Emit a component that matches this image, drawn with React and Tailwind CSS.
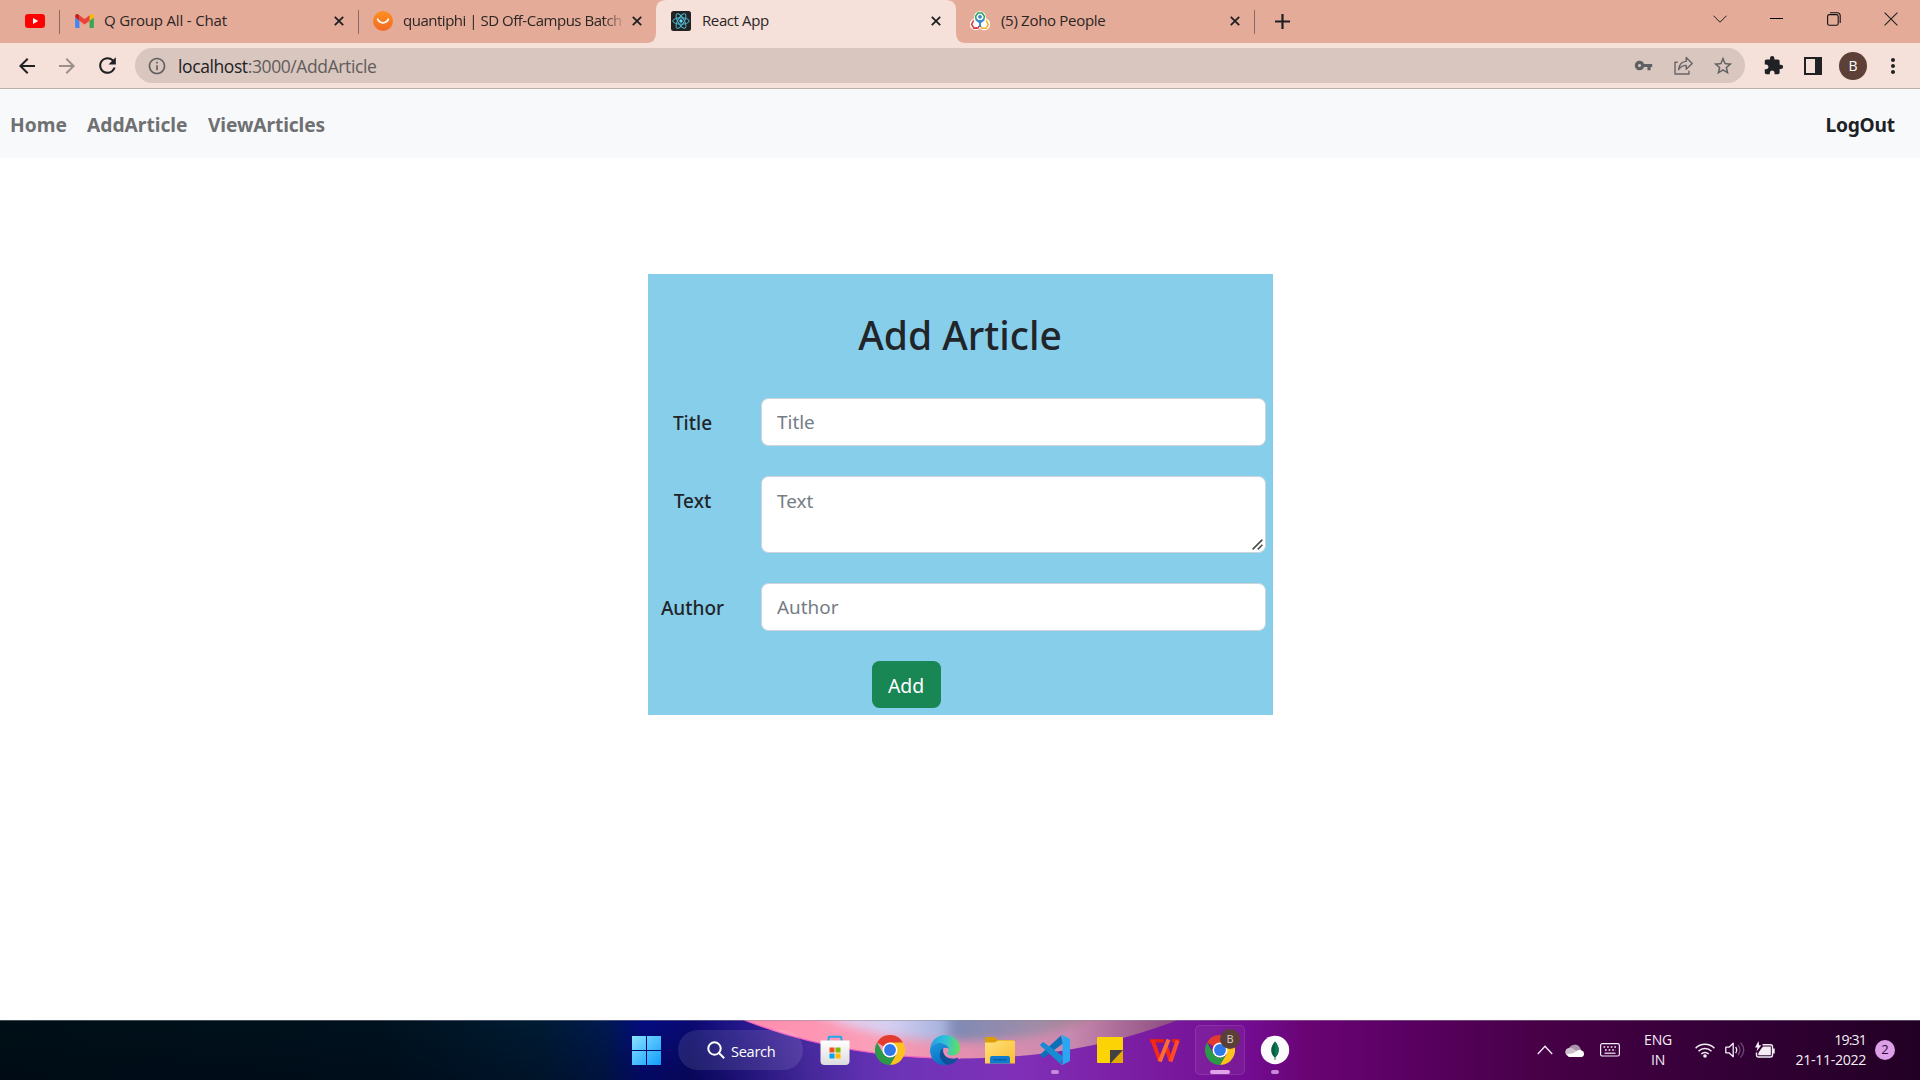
import React from "react";
import {
  MdArrowBack,
  MdArrowForward,
  MdRefresh,
  MdInfoOutline,
  MdVpnKey,
  MdStarBorder,
  MdExtension,
  MdMoreVert,
} from "react-icons/md";

/* ---------- Browser chrome ---------- */

function CloseMark() {
  return (
    <svg className="size-[10px] shrink-0" viewBox="0 0 10 10" stroke="#1f1f22" strokeWidth="1.8" fill="none">
      <path d="M.8 .8 9.2 9.2M9.2 .8.8 9.2" />
    </svg>
  );
}

function YouTubeIcon() {
  return (
    <svg className="h-[14px] w-5" viewBox="0 0 20 14">
      <rect width="20" height="14" rx="3.2" fill="#f00" />
      <path d="M8 4v6l5.2-3z" fill="#fff" />
    </svg>
  );
}

function GmailIcon() {
  return (
    <svg className="h-[14px] w-[19px]" viewBox="52 42 88 66">
      <path fill="#4285f4" d="M58 108h14V74L52 59v43c0 3.32 2.69 6 6 6" />
      <path fill="#34a853" d="M120 108h14c3.32 0 6-2.69 6-6V59l-20 15" />
      <path fill="#fbbc04" d="M120 48v26l20-15v-8c0-7.42-8.47-11.65-14.4-7.2" />
      <path fill="#ea4335" d="M72 74V48l24 18 24-18v26L96 92" />
      <path fill="#c5221f" d="M52 51v8l20 15V48l-5.6-4.2c-5.94-4.45-14.4-.22-14.4 7.2" />
    </svg>
  );
}

function SmileIcon() {
  return (
    <svg className="size-5" viewBox="0 0 20 20">
      <defs>
        <linearGradient id="smile" x1="0" y1="0" x2="0" y2="1">
          <stop offset="0" stopColor="#fd8f22" />
          <stop offset="1" stopColor="#f36a24" />
        </linearGradient>
      </defs>
      <circle cx="10" cy="10" r="10" fill="url(#smile)" />
      <path d="M4.6 8.2C6.6 13 13.4 13 15.4 8.2" stroke="#fff" strokeWidth="1.7" fill="none" strokeLinecap="round" />
    </svg>
  );
}

function ReactIcon() {
  return (
    <svg className="size-5" viewBox="0 0 20 20">
      <rect width="20" height="20" rx="2.5" fill="#222" />
      <g fill="none" stroke="#4fb8d3" strokeWidth="1">
        <ellipse cx="10" cy="10" rx="8.2" ry="3.2" />
        <ellipse cx="10" cy="10" rx="8.2" ry="3.2" transform="rotate(60 10 10)" />
        <ellipse cx="10" cy="10" rx="8.2" ry="3.2" transform="rotate(120 10 10)" />
      </g>
      <circle cx="10" cy="10" r="1.7" fill="#61dafb" />
    </svg>
  );
}

function ZohoIcon() {
  return (
    <svg className="size-5" viewBox="0 0 20 20">
      <g fill="#fff" stroke="#fff" strokeWidth="2">
        <circle cx="10" cy="6.2" r="5" />
        <circle cx="5.8" cy="13.2" r="5" />
        <circle cx="14.2" cy="13.2" r="5" />
      </g>
      <g fill="none" strokeWidth="1.5">
        <path d="M7.5 17 4 17.2 1.6 13.4 3.6 9.4" stroke="#e4333c" />
        <path d="M3.6 17.3h4.2l1.2-2.2" stroke="#e4333c" />
        <path d="M16 9.4l2.4 4-2.4 3.9h-4l-1.200-2" stroke="#f4b223" />
        <path d="M6.3 9 5.6 5.2 8 2h4l2.4 3.2L13.7 9" stroke="#23a55b" />
      </g>
      <circle cx="10" cy="5.8" r="1.9" fill="#3f84d0" />
      <path d="M6.2 8.6 10 11.6l3.8-3M10 9v7" stroke="#3f84d0" strokeWidth="2" fill="none" />
    </svg>
  );
}

function TabBar() {
  return (
    <div className="flex h-[43px] bg-[#e4ab99] text-[15px] text-[#2b2523]">
      <div className="flex w-[59px] items-center pb-px pl-[25px]">
        <YouTubeIcon />
      </div>
      <div className="mt-[10px] h-6 w-px bg-[#8b6a61]" />

      <div className="flex w-[298px] items-center pb-px pl-[15px] pr-[14px]">
        <GmailIcon />
        <span className="ml-[10px] flex-1 whitespace-nowrap pb-[2px] leading-5 tracking-[-0.17px]">Q Group All - Chat</span>
        <CloseMark />
      </div>
      <div className="mt-[10px] h-6 w-px bg-[#8b6a61]" />

      <div className="relative z-10 flex w-[297px] items-center pb-px pl-[14px] pr-[14px]">
        <SmileIcon />
        <span className="ml-[10px] w-[218px] overflow-hidden whitespace-nowrap pb-[2px] leading-5 tracking-[-0.48px] [mask-image:linear-gradient(to_right,black_92%,transparent_102%)]">
          quantiphi | SD Off-Campus Batch
        </span>
        <span className="ml-auto">
          <CloseMark />
        </span>
      </div>

      <div className="relative w-[300px]">
        <svg className="absolute -left-[10px] top-0 h-[43px] w-[320px]" viewBox="0 0 320 43" fill="#f6e1da">
          <path d="M0 43q10 0 10-10V10Q10 0 20 0H300q10 0 10 10V33q0 10 10 10z" />
        </svg>
        <div className="relative flex h-full items-center pb-px pl-[15px] pr-[15px]">
          <ReactIcon />
          <span className="ml-[11px] flex-1 whitespace-nowrap pb-[2px] leading-5 tracking-[-0.4px]">React App</span>
          <CloseMark />
        </div>
      </div>

      <div className="flex w-[298px] items-center pb-px pl-[14px] pr-[14px]">
        <ZohoIcon />
        <span className="ml-[11px] flex-1 whitespace-nowrap pb-[2px] leading-5 tracking-[-0.3px]">(5) Zoho People</span>
        <CloseMark />
      </div>
      <div className="mt-[10px] h-6 w-px bg-[#8b6a61]" />

      <div className="flex items-center pl-[20px]">
        <svg className="size-[15px]" viewBox="0 0 15 15" stroke="#1f1f22" strokeWidth="2.2">
          <path d="M7.5 0v15M0 7.5h15" />
        </svg>
      </div>

      <div className="ml-auto flex h-[37px] items-center">
        <div className="flex w-[57px] justify-center">
          <svg className="h-[8px] w-[14px]" viewBox="0 0 14 8" stroke="#222" fill="none">
            <path d="M.5 .7 7 7.2 13.5 .7" />
          </svg>
        </div>
        <div className="flex w-[57px] justify-center">
          <div className="h-px w-[13px] bg-black" />
        </div>
        <div className="flex w-[57px] justify-center">
          <svg className="size-[14px]" viewBox="0 0 14 14" stroke="#111" strokeWidth="1.1" fill="none">
            <rect x=".6" y="2.6" width="10.6" height="10.6" rx="1.8" />
            <path d="M3 .8h7.4a2.8 2.8 0 0 1 2.8 2.8V11" />
          </svg>
        </div>
        <div className="flex w-[58px] justify-center">
          <svg className="size-[14px]" viewBox="0 0 14 14" stroke="#222" strokeWidth="1.1" fill="none">
            <path d="M.6 .6 13.4 13.4M13.4 .6.6 13.4" />
          </svg>
        </div>
      </div>
    </div>
  );
}

function Cell({ children }) {
  return <div className="flex w-10 shrink-0 items-center justify-center">{children}</div>;
}

function Toolbar() {
  return (
    <div className="flex h-[46px] items-center border-b border-[#bcaeaa] bg-[#f6e1da] pl-[7px] pr-[7px] text-[#202124]">
      <Cell>
        <MdArrowBack className="size-6" />
      </Cell>
      <Cell>
        <MdArrowForward className="size-6 text-[#9b8f8c]" />
      </Cell>
      <Cell>
        <MdRefresh className="size-[25px]" />
      </Cell>
      <div className="ml-[8px] flex h-[35px] flex-1 items-center rounded-full bg-[#d8c6bf] pl-[12px] pr-[2px] text-[#5f6062]">
        <MdInfoOutline className="size-5" />
        <span className="ml-[11px] flex-1 pt-px text-[17.5px] leading-6 tracking-[-0.4px] text-[#625c5b]">
          <span className="text-[#202124]">localhost</span>:3000/AddArticle
        </span>
        <Cell>
          <MdVpnKey className="size-[19px]" />
        </Cell>
        <Cell>
          <svg className="size-[19px]" viewBox="0 0 19 19" fill="none" stroke="#6a6466" strokeWidth="1.4" strokeLinejoin="round">
            <path d="M3.6 6.2H1V18h14v-3.2" />
            <path d="M4.6 13.6C5.2 9 7.6 5.6 12.2 5.4V1.4l6 6-6 5.800V9.400c-3.400 0-5.800 1.400-7.600 4.200z" />
          </svg>
        </Cell>
        <Cell>
          <MdStarBorder className="size-[22px]" />
        </Cell>
      </div>
      <div className="ml-[8px] flex">
        <Cell>
          <MdExtension className="size-[21px]" />
        </Cell>
        <Cell>
          <svg className="size-[18px]" viewBox="0 0 18 18">
            <rect x="1" y="1" width="16" height="16" fill="none" stroke="#202124" strokeWidth="2" />
            <rect x="11" y="1" width="6" height="16" fill="#202124" />
          </svg>
        </Cell>
        <Cell>
          <div className="flex size-7 items-center justify-center rounded-full bg-[#5d4037] text-[14px] text-white">B</div>
        </Cell>
        <Cell>
          <MdMoreVert className="size-6" />
        </Cell>
      </div>
    </div>
  );
}

/* ---------- Page ---------- */

function NavBar() {
  return (
    <nav className="flex h-[69px] items-center bg-[#f8f9fb] pl-[10px] pr-[25px] pt-[2px] text-[19.2px] font-bold leading-8 text-[#6f7072]">
      <a className="w-[77px]">Home</a>
      <a className="w-[121px]">AddArticle</a>
      <a className="tracking-[-0.1px]">ViewArticles</a>
      <a className="ml-auto tracking-[-0.2px] text-[#1e2226]">LogOut</a>
    </nav>
  );
}

function Field({ label, children }) {
  return (
    <div className="flex">
      <label className="w-[90px] pt-[10px] text-center text-[19px] font-medium leading-[30px] text-[#212529]">{label}</label>
      <div className="relative ml-[23px] flex w-[505px]">{children}</div>
    </div>
  );
}

function ArticleForm() {
  const box =
    "w-full resize-none rounded-[7.5px] border border-[#ced4da] bg-white px-[15.5px] text-[18.9px] leading-[30px] text-[#212529] outline-none placeholder:text-[#757d85]";
  return (
    <form className="mx-auto h-[441px] w-[625px] bg-[#87ceeb]">
      <h1 className="pt-[37px] text-center text-[39px] font-medium leading-[48px] text-[#212529]">Add Article</h1>
      <div className="mt-[39px] flex flex-col gap-[30px]">
        <Field label="Title">
          <input className={`${box} h-12`} placeholder="Title" />
        </Field>
        <Field label="Text">
          <textarea className={`${box} block h-[77px] pt-[9px]`} placeholder="Text" />
          <svg className="absolute bottom-[3px] right-[3px] size-[11px]" viewBox="0 0 11 11" stroke="#4a4a4a" strokeWidth="1.5">
            <path d="M.6 10.400 10.400 .6M5.800 10.400 10.400 5.800" />
          </svg>
        </Field>
        <Field label="Author">
          <input className={`${box} h-12`} placeholder="Author" />
        </Field>
        <button
          type="button"
          className="ml-[224px] h-[47px] w-[69px] rounded-[7.5px] bg-[#198754] pt-[2px] text-[19.4px] leading-[30px] text-white"
        >
          Add
        </button>
      </div>
    </form>
  );
}

/* ---------- Taskbar ---------- */

function Wallpaper() {
  return (
    <svg className="absolute inset-0 h-full w-full" viewBox="0 0 1920 60" preserveAspectRatio="none">
      <defs>
        <linearGradient id="base" x1="0" x2="1" y1="0" y2="0">
          <stop offset="0" stopColor="#001017" />
          <stop offset=".2" stopColor="#00131f" />
          <stop offset=".28" stopColor="#001c33" />
          <stop offset=".315" stopColor="#001a50" />
          <stop offset=".335" stopColor="#050c80" />
          <stop offset=".36" stopColor="#0a0a72" />
          <stop offset=".385" stopColor="#25178c" />
          <stop offset=".42" stopColor="#4a2ba4" />
          <stop offset=".47" stopColor="#6d34b8" />
          <stop offset=".53" stopColor="#8030b8" />
          <stop offset=".6" stopColor="#7a1ba0" />
          <stop offset=".65" stopColor="#730c92" />
          <stop offset=".68" stopColor="#6a0474" />
          <stop offset=".73" stopColor="#5b0064" />
          <stop offset=".8" stopColor="#480047" />
          <stop offset=".9" stopColor="#330036" />
          <stop offset="1" stopColor="#220024" />
        </linearGradient>
        <linearGradient id="shade" x1="0" x2="0" y1="0" y2="1">
          <stop offset="0" stopColor="#001" stopOpacity="0" />
          <stop offset="1" stopColor="#001" stopOpacity=".28" />
        </linearGradient>
        <linearGradient id="shadeFade" x1="0" x2="1" y1="0" y2="0">
          <stop offset=".8" stopColor="#fff" />
          <stop offset="1" stopColor="#000" />
        </linearGradient>
        <mask id="shadeMask">
          <rect width="860" height="60" fill="url(#shadeFade)" />
        </mask>
        <linearGradient id="rim" x1="745" x2="1177" y1="0" y2="0" gradientUnits="userSpaceOnUse">
          <stop offset="0" stopColor="#ff8cae" />
          <stop offset=".3" stopColor="#fb9fb8" />
          <stop offset=".5" stopColor="#e58fae" />
          <stop offset=".75" stopColor="#c98ab0" />
          <stop offset="1" stopColor="#8a4a80" />
        </linearGradient>
        <linearGradient id="glow" x1="790" x2="1120" y1="0" y2="0" gradientUnits="userSpaceOnUse">
          <stop offset="0" stopColor="#f6c3dc" />
          <stop offset=".3" stopColor="#d5cff2" />
          <stop offset=".46" stopColor="#a9b4de" />
          <stop offset=".5" stopColor="#7f8ab4" />
          <stop offset=".75" stopColor="#a08ca8" />
          <stop offset="1" stopColor="#b77a80" />
        </linearGradient>
        <filter id="soft" x="-10%" y="-60%" width="120%" height="220%">
          <feGaussianBlur stdDeviation="5" />
        </filter>
        <clipPath id="bowl">
          <path d="M744 0C800 22 870 38.500 960 38.500S1120 22 1178 0z" />
        </clipPath>
      </defs>
      <rect width="1920" height="60" fill="url(#base)" />
      <rect width="860" height="60" fill="url(#shade)" mask="url(#shadeMask)" />
      <g clipPath="url(#bowl)">
        <rect x="740" width="440" height="60" fill="url(#rim)" />
        <path d="M800-14C850 12 900 21 960 21s110-9 160-35z" fill="url(#glow)" filter="url(#soft)" />
      </g>
      <path d="M744 0C800 22 870 38.500 960 38.500" fill="none" stroke="#f05fc0" strokeWidth="1.200" />
      <rect width="1920" height="1" fill="#8b8b98" fillOpacity=".5" />
    </svg>
  );
}

function ChromeLogo() {
  return (
    <svg className="size-[30px]" viewBox="0 0 48 48">
      <path d="M24 24 3.200 12A24 24 0 0 1 44.800 12z" fill="#e33b2e" />
      <path d="M24 12H44.800A24 24 0 0 1 24 48L34.400 30z" fill="#fcc31e" />
      <path d="M3.200 12 13.600 30A12 12 0 0 0 34.400 30L24 48A24 24 0 0 1 3.200 12z" fill="#2b9a48" />
      <circle cx="24" cy="24" r="12" fill="#fff" />
      <circle cx="24" cy="24" r="9.500" fill="#2f78ea" />
    </svg>
  );
}

function EdgeLogo() {
  return (
    <svg className="size-[30px]" viewBox="0 0 30 30">
      <defs>
        <linearGradient id="edgeTop" x1="0" y1=".4" x2="1" y2=".5">
          <stop offset="0" stopColor="#1f9fe4" />
          <stop offset=".5" stopColor="#2fc3d6" />
          <stop offset="1" stopColor="#63e05c" />
        </linearGradient>
        <linearGradient id="edgeSide" x1="0" y1="0" x2=".5" y2="1">
          <stop offset="0" stopColor="#1c9ade" />
          <stop offset="1" stopColor="#0c6fc4" />
        </linearGradient>
      </defs>
      <path d="M0 14C1 5.500 7.500 0 15 0c9 0 15 6 15 13 0 5-3.600 7.500-7.800 7.500-3.600 0-5.200-1.500-4.600-2.700.6-1 1.200-1.700 1.200-3.300C18.800 10 13 8 9 8 4.500 8 1.200 10.600 0 14z" fill="url(#edgeTop)" />
      <path d="M0 15C.5 10.500 5 8 9 8c4.500 0 9.500 2.500 9.800 6-1.500-1.800-4-1.700-5.600-.4C9 17 10 24 17 29.800 7 31.500 0 24 0 15z" fill="url(#edgeSide)" />
      <path d="M13.200 13.600C8.500 15.500 8 26 17 29.800c5 0 8.800-2.600 10.800-6 .4-.8-.3-1.300-1-.9-6 2.900-15-.9-13.600-9.300z" fill="#114f98" />
    </svg>
  );
}

function StoreLogo() {
  return (
    <svg className="size-[30px]" viewBox="0 0 30 30">
      <defs>
        <linearGradient id="bag" x1="0" y1="0" x2="0" y2="1">
          <stop offset="0" stopColor="#fff" />
          <stop offset="1" stopColor="#dcdcde" />
        </linearGradient>
      </defs>
      <path d="M8.500 7V3.200Q8.500 1.800 10 1.800h10q1.500 0 1.500 1.400V7" fill="none" stroke="#25a8ea" strokeWidth="2" />
      <path d="M.5 5.500h29V26q0 4-4 4h-21q-4 0-4-4z" fill="url(#bag)" />
      <path d="M9.500 12.500h5v5h-5z" fill="#f25022" />
      <path d="M15.500 12.500h5v5h-5z" fill="#7fba00" />
      <path d="M9.500 18.500h5v5h-5z" fill="#00a4ef" />
      <path d="M15.500 18.500h5v5h-5z" fill="#ffb900" />
    </svg>
  );
}

function FolderLogo() {
  return (
    <svg className="size-[30px]" viewBox="0 0 30 30">
      <defs>
        <linearGradient id="folder" x1="0" y1="0" x2="1" y2="1">
          <stop offset="0" stopColor="#ffe27a" />
          <stop offset="1" stopColor="#fbbd33" />
        </linearGradient>
      </defs>
      <path d="M0 3.500Q0 2 1.500 2H9q1 0 1.800.9L13 5H28.500V10H0z" fill="#dc9d06" />
      <path d="M0 7.500h9.500L13 5.500H28.500Q30 5.500 30 7V28.500H0z" fill="url(#folder)" />
      <path d="M5 28.500V23q0-2 2-2H23q2 0 2 2v5.500z" fill="#0f7dcf" />
      <path d="M8.500 24.800h13" stroke="#0a4f91" strokeWidth="1" />
    </svg>
  );
}

function CodeLogo() {
  return (
    <svg className="size-[30px]" viewBox="0 0 30 30">
      <path d="M.6 19.200 21 .6 23 8.500 4 22.500q-.8.600-1.500 0L.6 20.800q-.8-.800 0-1.600z" fill="#0b70b8" />
      <path d="M.6 10.800 21 29.400l2-7.900L4 7.500q-.8-.6-1.500 0L.6 9.200q-.8.800 0 1.600z" fill="#178bd4" />
      <path d="M22 0 28.800 3.200Q30 3.800 30 5V25q0 1.200-1.200 1.800L22 30q-1 .2-1.400-.6 1.900.8 1.900-1.400V2q0-2.200-1.900-1.400Q21-.2 22 0z" fill="#2aa6f2" />
    </svg>
  );
}

function StickyLogo() {
  return (
    <svg className="size-[30px]" viewBox="0 0 30 30">
      <rect x="2" y="2" width="26" height="26" rx="1" fill="#fcd405" />
      <path d="M28 15V28H15z" fill="#e3ab00" />
      <path d="M15 28V15H28L15.800 28z" fill="#414144" />
    </svg>
  );
}

function WpsLogo() {
  return (
    <svg className="size-[30px]" viewBox="0 0 30 30" fill="none" strokeWidth="4">
      <path d="M0 5.800H14" stroke="#e62012" strokeWidth="3.400" />
      <path d="M2.500 5 10 26" stroke="#f32a16" />
      <path d="M22 5.800H29.400" stroke="#e62012" strokeWidth="3.400" />
      <path d="M15.800 11 20.800 26" stroke="#f32a16" />
      <path d="M9.800 26.500 18.500 4.500" stroke="#ff6a35" />
      <path d="M20.500 26.500 27.600 5.500" stroke="#ff4a2a" />
    </svg>
  );
}

function MongoLogo() {
  return (
    <svg className="size-[30px]" viewBox="0 0 30 30">
      <circle cx="15" cy="15" r="14.200" fill="#fbfbfb" />
      <path d="M15 6.500c-5 5.500-5 11.500-.4 16V25h.8v-2.500c4.600-4.500 4.600-10.500-.4-16z" fill="#0b5d45" />
      <path d="M15 6.500V22.500c4.600-4.500 5-10.500 0-16z" fill="#087a50" />
    </svg>
  );
}

function TaskIcon({ children, bar }) {
  return (
    <div className="relative flex h-full w-[55px] items-center justify-center">
      {children}
      {bar === "dot" && <div className="absolute bottom-[6px] h-1 w-2 rounded-full bg-[#c48bd8]" />}
      {bar === "wide" && <div className="absolute bottom-[6px] h-1 w-5 rounded-full bg-[#e0a3ea]" />}
    </div>
  );
}

function Tray() {
  return (
    <div className="ml-auto flex items-center text-[#f4eef5]">
      <svg className="h-[10px] w-4" viewBox="0 0 16 10" fill="none" stroke="currentColor" strokeWidth="1.300">
        <path d="M.8 9 8 1.200 15.200 9" />
      </svg>
      <svg className="ml-[12px] h-[13px] w-5" viewBox="0 0 20 13">
        <path d="M4 4.500A6 5.500 0 0 1 15 3.500L17 8H3z" fill="#a893ab" />
        <path d="M2 11.500A4.200 4.200 0 0 1 3.500 4Q7.500 3 11 6.500L18 11z" fill="#cdbfce" />
        <path d="M4 13A3.500 3.500 0 0 1 2 10Q8 10 11 7.500 14 4.500 16.500 6.500a3.400 3.400 0 0 1 .3 6.500z" fill="#fff" />
      </svg>
      <svg className="ml-[15px] h-[14px] w-5" viewBox="0 0 20 14" fill="none" stroke="currentColor" strokeWidth="1.200">
        <rect x=".6" y=".6" width="18.800" height="12.400" rx="1.800" />
        <path d="M3.500 4h13M5 7h11" strokeWidth="1.600" strokeDasharray="1.700 1.900" />
        <path d="M4.500 10.200h11" />
      </svg>
      <div className="ml-[24px] w-7 text-center text-[14px] leading-5 tracking-[-0.2px]">
        <div>ENG</div>
        <div>IN</div>
      </div>
      <svg className="ml-[23px] h-[16px] w-5" viewBox="0 0 20 16" fill="none" stroke="currentColor" strokeWidth="1.500">
        <path d="M.6 6.200a13.300 13.300 0 0 1 18.800 0M3.500 9.200a9.200 9.200 0 0 1 13 0M6.300 12a5.200 5.200 0 0 1 7.400 0" />
        <circle cx="10" cy="14" r="1.800" fill="currentColor" stroke="none" />
      </svg>
      <svg className="ml-[10px] h-[18px] w-5" viewBox="0 0 20 18" fill="none" stroke="currentColor" strokeWidth="1.300">
        <path d="M.8 6.200H4L8.200 2.300V15.700L4 11.800H.8z" strokeLinejoin="round" />
        <path d="M10.600 6q2.200 3 0 6" />
        <path d="M13 4q4 5 0 10M15.500 1.500q6.500 7.500 0 15" stroke="#6f4a76" />
      </svg>
      <svg className="ml-[10px] h-[18px] w-5" viewBox="0 0 20 18" fill="none" stroke="currentColor" strokeWidth="1.400">
        <path d="M7.500 3.700h8q2 0 2 2V14q0 2-2 2H3.500q-2 0-2-2V11.500" />
        <path d="M8 5.500H15.800V14.200H3.300V12L6 8z" fill="currentColor" stroke="none" />
        <path d="M18.600 7.500v5" strokeWidth="2.200" />
        <path d="M3.600 0 0 6.500H2.500L1.500 10.500 6.300 4.300H4z" fill="currentColor" stroke="none" />
      </svg>
      <div className="ml-[19px] flex w-[72px] flex-col items-end text-[14.2px] leading-5">
        <div className="tracking-[-0.9px]">19:31</div>
        <div className="whitespace-nowrap tracking-[-0.35px]">21-11-2022</div>
      </div>
      <div className="ml-[9px] mr-[25px] flex size-5 items-center justify-center rounded-full bg-[#dc9fe8] text-[13px] text-[#2a1030]">2</div>
    </div>
  );
}

function Taskbar() {
  return (
    <div className="relative h-[60px] overflow-hidden">
      <Wallpaper />
      <div className="relative flex h-full items-center pl-[632px]">
        <svg className="size-[29px]" viewBox="0 0 29 29">
          <defs>
            <linearGradient id="win" x1="0" y1="0" x2="29" y2="29" gradientUnits="userSpaceOnUse">
              <stop offset="0" stopColor="#8ae2ff" />
              <stop offset="1" stopColor="#0f9cfb" />
            </linearGradient>
          </defs>
          <path d="M0 0h14v14H0zM15 0h14v14H15zM0 15h14v14H0zM15 15h14v14H15z" fill="url(#win)" />
        </svg>
        <div className="ml-[17px] flex h-10 w-[125px] items-center rounded-full bg-white/10 pl-[29px]">
          <svg className="size-[18px]" viewBox="0 0 18 18" fill="none" stroke="#fff" strokeWidth="2">
            <circle cx="7.500" cy="7.500" r="6.200" />
            <path d="M12 12 17.200 17.200" />
          </svg>
          <span className="ml-[6px] pt-px text-[14.600px] leading-5 tracking-[-0.3px] text-white">Search</span>
        </div>
        <div className="ml-[4px] flex h-full">
          <TaskIcon><StoreLogo /></TaskIcon>
          <TaskIcon><ChromeLogo /></TaskIcon>
          <TaskIcon><EdgeLogo /></TaskIcon>
          <TaskIcon><FolderLogo /></TaskIcon>
          <TaskIcon bar="dot"><CodeLogo /></TaskIcon>
          <TaskIcon><StickyLogo /></TaskIcon>
          <TaskIcon><WpsLogo /></TaskIcon>
          <TaskIcon bar="wide">
            <div className="flex size-[50px] shrink-0 items-center justify-center rounded-[5px] border border-white/10 bg-white/5">
              <ChromeLogo />
            </div>
            <div className="absolute left-[28px] top-[9px] flex size-5 items-center justify-center rounded-full bg-[#5a3f38] text-[11px] font-medium text-[#ddd0cd]">
              B
            </div>
          </TaskIcon>
          <TaskIcon bar="dot"><MongoLogo /></TaskIcon>
        </div>
        <Tray />
      </div>
    </div>
  );
}

export default function App() {
  return (
    <div className="flex h-[1080px] w-[1920px] flex-col overflow-hidden bg-white font-['Open_Sans','Noto_Sans',sans-serif]">
      <TabBar />
      <Toolbar />
      <main className="flex-1 font-['Noto_Sans','Open_Sans',sans-serif]">
        <NavBar />
        <div className="pt-[116px]">
          <ArticleForm />
        </div>
      </main>
      <Taskbar />
    </div>
  );
}
